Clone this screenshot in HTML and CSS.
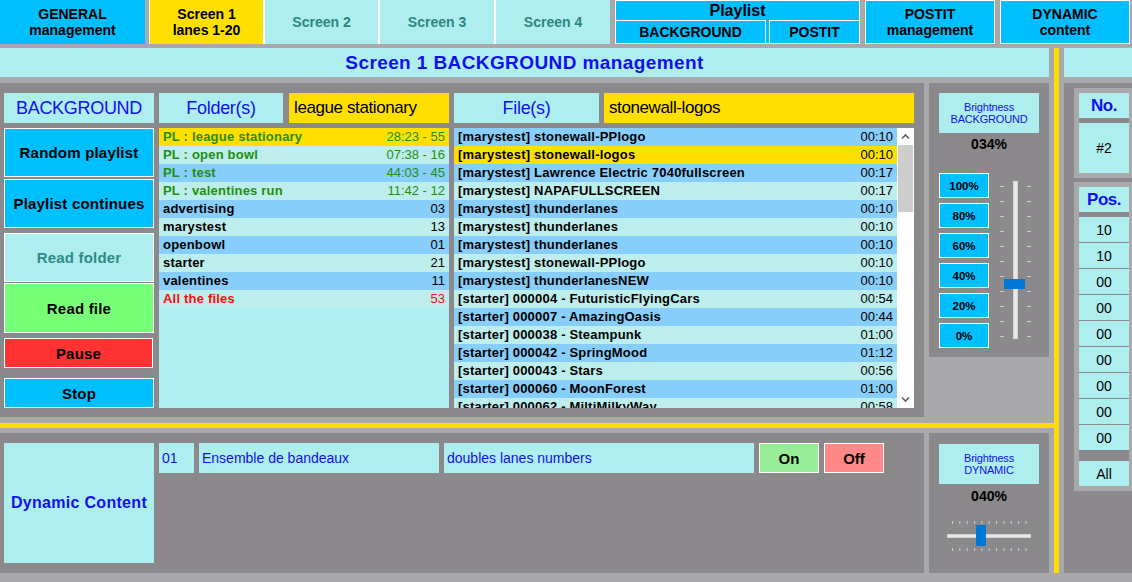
FILE: index.html
```html
<!DOCTYPE html>
<html>
<head>
<meta charset="utf-8">
<title>Screen 1 BACKGROUND management</title>
<link rel="stylesheet" href="styles.css">
</head>
<body>
<div class="app">
  <nav class="topnav">
    <div class="nav-btn general">GENERAL<br>management</div>
    <div class="tabs">
      <div class="tab active">Screen 1<br>lanes 1-20</div>
      <div class="tab">Screen 2</div>
      <div class="tab wide">Screen 3</div>
      <div class="tab wide">Screen 4</div>
    </div>
    <div class="playlist">
      <div class="pl-title">Playlist</div>
      <div class="pl-subs">
        <div class="pl-sub pl-bg">BACKGROUND</div>
        <div class="pl-sub pl-postit">POSTIT</div>
      </div>
    </div>
    <div class="nav-btn">POSTIT<br>management</div>
    <div class="nav-btn">DYNAMIC<br>content</div>
  </nav>

  <div class="main">
    <div class="leftcol">
      <div class="title">Screen 1 BACKGROUND management</div>

      <div class="upper">
        <div class="panel bgpanel">
          <div class="col-btns">
            <div class="hdr">BACKGROUND</div>
            <div class="btn blue tall b-random">Random playlist</div>
            <div class="btn blue tall b-cont">Playlist continues</div>
            <div class="btn cyan tall b-rfolder">Read folder</div>
            <div class="btn green b-rfile">Read file</div>
            <div class="btn red b-pause">Pause</div>
            <div class="btn blue b-stop">Stop</div>
          </div>

          <div class="col-folders">
            <div class="hdr-row">
              <div class="hdr h-folders">Folder(s)</div>
              <div class="field f-folder">league stationary</div>
            </div>
            <div class="list">
              <div class="row sel pl"><span class="n">PL : league stationary</span><span>28:23 - 55</span></div>
              <div class="row pl"><span class="n">PL : open bowl</span><span>07:38 - 16</span></div>
              <div class="row pl"><span class="n">PL : test</span><span>44:03 - 45</span></div>
              <div class="row pl"><span class="n">PL : valentines run</span><span>11:42 - 12</span></div>
              <div class="row"><span class="n">advertising</span><span>03</span></div>
              <div class="row"><span class="n">marystest</span><span>13</span></div>
              <div class="row"><span class="n">openbowl</span><span>01</span></div>
              <div class="row"><span class="n">starter</span><span>21</span></div>
              <div class="row"><span class="n">valentines</span><span>11</span></div>
              <div class="row allf"><span class="n">All the files</span><span>53</span></div>
            </div>
          </div>

          <div class="col-files">
            <div class="hdr-row">
              <div class="hdr h-files">File(s)</div>
              <div class="field f-file">stonewall-logos</div>
            </div>
            <div class="list files-list">
              <div class="rows">
                <div class="row"><span class="n">[marystest] stonewall-PPlogo</span><span>00:10</span></div>
                <div class="row sel"><span class="n">[marystest] stonewall-logos</span><span>00:10</span></div>
                <div class="row"><span class="n">[marystest] Lawrence Electric 7040fullscreen</span><span>00:17</span></div>
                <div class="row"><span class="n">[marystest] NAPAFULLSCREEN</span><span>00:17</span></div>
                <div class="row"><span class="n">[marystest] thunderlanes</span><span>00:10</span></div>
                <div class="row"><span class="n">[marystest] thunderlanes</span><span>00:10</span></div>
                <div class="row"><span class="n">[marystest] thunderlanes</span><span>00:10</span></div>
                <div class="row"><span class="n">[marystest] stonewall-PPlogo</span><span>00:10</span></div>
                <div class="row"><span class="n">[marystest] thunderlanesNEW</span><span>00:10</span></div>
                <div class="row"><span class="n">[starter] 000004 - FuturisticFlyingCars</span><span>00:54</span></div>
                <div class="row"><span class="n">[starter] 000007 - AmazingOasis</span><span>00:44</span></div>
                <div class="row"><span class="n">[starter] 000038 - Steampunk</span><span>01:00</span></div>
                <div class="row"><span class="n">[starter] 000042 - SpringMood</span><span>01:12</span></div>
                <div class="row"><span class="n">[starter] 000043 - Stars</span><span>00:56</span></div>
                <div class="row"><span class="n">[starter] 000060 - MoonForest</span><span>01:00</span></div>
                <div class="row"><span class="n">[starter] 000062 - MiltiMilkyWay</span><span>00:58</span></div>
              </div>
              <div class="scrollbar">
                <svg class="sb-arrow" width="17" height="17" viewBox="0 0 17 17"><polyline points="5,10.5 8.5,7 12,10.5" fill="none" stroke="#606060" stroke-width="1.6"/></svg>
                <div class="sb-track"><div class="sb-thumb"></div></div>
                <svg class="sb-arrow" width="17" height="17" viewBox="0 0 17 17"><polyline points="5,6.5 8.5,10 12,6.5" fill="none" stroke="#606060" stroke-width="1.6"/></svg>
              </div>
            </div>
          </div>
        </div>

        <div class="panel bright">
          <div class="blabel"><span>Brightness</span><span>BACKGROUND</span></div>
          <div class="bpct">034%</div>
          <div class="bbody">
            <div class="bbtns">
              <div class="bbtn">100%</div>
              <div class="bbtn">80%</div>
              <div class="bbtn">60%</div>
              <div class="bbtn">40%</div>
              <div class="bbtn">20%</div>
              <div class="bbtn">0%</div>
            </div>
            <svg class="vslider" width="31" height="158" viewBox="0 0 31 158">
              <g stroke="#cfcfcf" stroke-width="1">
                <line x1="0" y1="5.5" x2="4" y2="5.5"/><line x1="27" y1="5.5" x2="31" y2="5.5"/>
                <line x1="0" y1="20.5" x2="4" y2="20.5"/><line x1="27" y1="20.5" x2="31" y2="20.5"/>
                <line x1="0" y1="35.5" x2="4" y2="35.5"/><line x1="27" y1="35.5" x2="31" y2="35.5"/>
                <line x1="0" y1="50.5" x2="4" y2="50.5"/><line x1="27" y1="50.5" x2="31" y2="50.5"/>
                <line x1="0" y1="65.5" x2="4" y2="65.5"/><line x1="27" y1="65.5" x2="31" y2="65.5"/>
                <line x1="0" y1="80.5" x2="4" y2="80.5"/><line x1="27" y1="80.5" x2="31" y2="80.5"/>
                <line x1="0" y1="95.5" x2="4" y2="95.5"/><line x1="27" y1="95.5" x2="31" y2="95.5"/>
                <line x1="0" y1="110.5" x2="4" y2="110.5"/><line x1="27" y1="110.5" x2="31" y2="110.5"/>
                <line x1="0" y1="125.5" x2="4" y2="125.5"/><line x1="27" y1="125.5" x2="31" y2="125.5"/>
                <line x1="0" y1="140.5" x2="4" y2="140.5"/><line x1="27" y1="140.5" x2="31" y2="140.5"/>
                <line x1="0" y1="155.5" x2="4" y2="155.5"/><line x1="27" y1="155.5" x2="31" y2="155.5"/>
              </g>
              <rect x="13.5" y="0.5" width="4" height="157" fill="#e7e7e7" stroke="#d4d4d4"/>
              <rect x="4" y="98" width="21" height="10" fill="#0078d7"/>
            </svg>
          </div>
        </div>
      </div>

      <div class="hline"></div>

      <div class="lower">
        <div class="panel dynpanel">
          <div class="dynbox">Dynamic Content</div>
          <div class="cell c-num">01</div>
          <div class="cell c-name">Ensemble de bandeaux</div>
          <div class="cell c-desc">doubles lanes numbers</div>
          <div class="onoff on">On</div>
          <div class="onoff off">Off</div>
        </div>
        <div class="panel bright bright-dyn">
          <div class="blabel"><span>Brightness</span><span>DYNAMIC</span></div>
          <div class="bpct pct-dyn">040%</div>
          <svg class="hslider" width="84" height="30" viewBox="0 0 84 30">
            <g stroke="#cfcfcf" stroke-width="1">
              <line x1="5.5" y1="0" x2="5.5" y2="3"/><line x1="5.5" y1="27" x2="5.5" y2="30"/>
              <line x1="12.8" y1="0" x2="12.8" y2="3"/><line x1="12.8" y1="27" x2="12.8" y2="30"/>
              <line x1="20.2" y1="0" x2="20.2" y2="3"/><line x1="20.2" y1="27" x2="20.2" y2="30"/>
              <line x1="27.5" y1="0" x2="27.5" y2="3"/><line x1="27.5" y1="27" x2="27.5" y2="30"/>
              <line x1="34.9" y1="0" x2="34.9" y2="3"/><line x1="34.9" y1="27" x2="34.9" y2="30"/>
              <line x1="42.2" y1="0" x2="42.2" y2="3"/><line x1="42.2" y1="27" x2="42.2" y2="30"/>
              <line x1="49.6" y1="0" x2="49.6" y2="3"/><line x1="49.6" y1="27" x2="49.6" y2="30"/>
              <line x1="56.9" y1="0" x2="56.9" y2="3"/><line x1="56.9" y1="27" x2="56.9" y2="30"/>
              <line x1="64.3" y1="0" x2="64.3" y2="3"/><line x1="64.3" y1="27" x2="64.3" y2="30"/>
              <line x1="71.6" y1="0" x2="71.6" y2="3"/><line x1="71.6" y1="27" x2="71.6" y2="30"/>
              <line x1="79" y1="0" x2="79" y2="3"/><line x1="79" y1="27" x2="79" y2="30"/>
            </g>
            <rect x="0.5" y="13.5" width="83" height="3" fill="#e7e7e7" stroke="#d4d4d4"/>
            <rect x="29" y="4" width="10" height="21" fill="#0078d7"/>
          </svg>
        </div>
      </div>
    </div>

    <div class="vline"></div>

    <div class="rightcol">
      <div class="rtitle"></div>
      <div class="rpanel">
        <div class="rbox">
          <div class="rcell rhead">No.</div>
          <div class="rcell rbig">#2</div>
        </div>
        <div class="rbox rbox-pos">
          <div class="rcell rhead">Pos.</div>
          <div class="rrows">
            <div class="rcell">10</div>
            <div class="rcell">10</div>
            <div class="rcell">00</div>
            <div class="rcell">00</div>
            <div class="rcell">00</div>
            <div class="rcell">00</div>
            <div class="rcell">00</div>
            <div class="rcell">00</div>
            <div class="rcell">00</div>
          </div>
          <div class="rcell rall">All</div>
        </div>
      </div>
    </div>
  </div>
</div>
</body>
</html>
```

FILE: styles.css
```css
* { box-sizing: border-box; margin: 0; padding: 0; }
html, body { width: 1132px; height: 582px; overflow: hidden; }
body {
  background: #a9a8aa;
  font-family: "Liberation Sans", Arial, sans-serif;
  color: #000;
}
.app { width: 1132px; height: 582px; overflow: hidden; }

/* ---------- top navigation ---------- */
.topnav { display: flex; height: 44px; }
.nav-btn {
  width: 130px;
  margin-left: 5px;
  background: #00bfff;
  border: 1px solid #fff;
  display: flex; align-items: center; justify-content: center;
  text-align: center;
  font-weight: bold; font-size: 14px; line-height: 16px;
}
.nav-btn.general { width: 145px; margin-left: 0; border: none; }
.tabs {
  display: flex; gap: 2px;
  width: 461px; margin-left: 4px; padding-left: 1px;
  background: #fff;
}
.tab {
  width: 113px;
  background: #afeeee;
  color: #2b8585;
  display: flex; align-items: center; justify-content: center;
  text-align: center;
  font-weight: bold; font-size: 14px; line-height: 16px;
}
.tab.wide { width: 114px; }
.tab.active { background: #ffdf00; color: #000; }
.playlist {
  width: 245px; margin-left: 5px;
  background: #00bfff;
  border: 1px solid #fff;
  display: flex; flex-direction: column;
}
.pl-title { height: 19px; line-height: 19px; text-align: center; font-weight: bold; font-size: 16px; }
.pl-subs { flex: 1; display: flex; justify-content: space-between; }
.pl-sub {
  border: 1px solid #fff; border-bottom: none;
  display: flex; align-items: center; justify-content: center;
  font-weight: bold; font-size: 14px;
}
.pl-bg { width: 151px; margin-left: -1px; }
.pl-postit { width: 91px; margin-right: -1px; }

/* ---------- main area ---------- */
.main { display: flex; height: 525px; margin-top: 4px; }
.leftcol { width: 1049px; display: flex; flex-direction: column; }
.title {
  height: 29px;
  background: #afeeee;
  color: #1010f0;
  display: flex; align-items: center; justify-content: center;
  font-weight: bold; font-size: 19px; letter-spacing: 0.4px;
}
.upper { display: flex; height: 334px; margin-top: 6px; }
.panel { background: #8b898c; }
.bgpanel { width: 924px; padding: 10px 10px 9px 4px; display: flex; gap: 5px; }

.hdr {
  height: 30px;
  background: #afeeee;
  color: #1010f0;
  display: flex; align-items: center; justify-content: center;
  font-size: 18px; letter-spacing: -0.3px;
}
.col-btns { width: 150px; display: flex; flex-direction: column; }
.btn {
  border: 1px solid #fff;
  display: flex; align-items: center; justify-content: center;
  font-weight: bold; font-size: 15px; letter-spacing: 0.2px;
  height: 30px;
}
.btn.tall { height: 49px; }
.btn.blue { background: #00bfff; }
.btn.cyan { background: #afeeee; color: #2e8a8a; }
.btn.green { background: #77ff77; height: 50px; }
.btn.red { background: #ff3333; width: 149px; }
.b-random { margin-top: 5px; }
.b-cont { margin-top: 2px; }
.b-rfolder { margin-top: 5px; }
.b-rfile { margin-top: 1px; }
.b-pause { margin-top: 5px; }
.b-stop { margin-top: 10px; }

.col-folders { width: 290px; }
.col-files { width: 460px; }
.hdr-row { display: flex; height: 30px; gap: 6px; }
.col-files .hdr-row { gap: 5px; }
.h-folders { width: 124px; }
.h-files { width: 145px; }
.field {
  flex: 1;
  background: #ffdf00;
  display: flex; align-items: center;
  padding-left: 5px;
  font-size: 17px; letter-spacing: -0.4px;
}

.list { margin-top: 5px; height: 280px; background: #afeeee; overflow: hidden; }
.row {
  display: flex; justify-content: space-between;
  height: 18px; line-height: 18px;
  padding: 0 4px;
  font-size: 13px;
  white-space: nowrap;
}
.row .n { font-weight: bold; letter-spacing: 0.2px; }
.row:nth-child(odd) { background: #87cefa; }
.row:nth-child(even) { background: #bdeeec; }
.row.sel { background: #ffdf00; }
.row.pl { color: #1f8f0f; }
.row.allf { color: #ff0a0a; }

.files-list { display: flex; }
.rows { flex: 1; overflow: hidden; }
.scrollbar { width: 17px; background: #fff; display: flex; flex-direction: column; }
.sb-arrow { display: block; flex: none; }
.sb-track { flex: 1; padding: 0 1px; }
.sb-thumb { height: 67px; background: #cdcdcd; }

/* ---------- brightness panels ---------- */
.bright { width: 120px; margin-left: 5px; height: 274px; padding: 10px 10px 0 10px; }
.blabel {
  width: 100px; height: 40px;
  background: #afeeee;
  color: #1010f0;
  display: flex; flex-direction: column; align-items: center; justify-content: center;
  font-size: 11px; line-height: 12px; letter-spacing: -0.2px;
}
.bpct { width: 100px; height: 22px; line-height: 22px; text-align: center; font-weight: bold; font-size: 14px; }
.bbody { display: flex; margin-top: 18px; }
.bbtns { width: 50px; display: flex; flex-direction: column; gap: 5px; }
.bbtn {
  height: 25px;
  background: #00bfff;
  border: 1px solid #fff;
  display: flex; align-items: center; justify-content: center;
  font-weight: bold; font-size: 11.5px;
}
.vslider { display: block; margin-left: 11px; margin-top: 8px; }

.hline { height: 5px; margin-top: 6px; margin-right: -5px; background: #ffdd00; }
.lower { display: flex; height: 140px; margin-top: 5px; }
.dynpanel { width: 924px; padding: 10px 4px; display: flex; gap: 5px; align-items: flex-start; }
.dynbox {
  width: 150px; height: 120px;
  background: #afeeee;
  color: #1010f0;
  display: flex; align-items: center; justify-content: center;
  font-weight: bold; font-size: 16px; letter-spacing: 0.3px;
}
.cell {
  height: 30px;
  background: #afeeee;
  color: #1010f0;
  display: flex; align-items: center;
  padding-left: 3px;
  font-size: 14px;
}
.c-num { width: 35px; }
.c-name { width: 240px; }
.c-desc { width: 310px; }
.onoff {
  width: 60px; height: 30px;
  border: 1px solid #fff;
  display: flex; align-items: center; justify-content: center;
  font-weight: bold; font-size: 15px;
}
.onoff.on { background: #98ee98; }
.onoff.off { background: #ff8888; }
.bright-dyn { height: 140px; padding-top: 11px; }
.pct-dyn { height: 24px; line-height: 24px; }
.hslider { display: block; margin-left: 8px; margin-top: 13px; }

/* ---------- right column ---------- */
.vline { width: 5px; margin: 0 5px; background: #ffdd00; }
.rightcol { width: 68px; display: flex; flex-direction: column; }
.rtitle { height: 29px; background: #afeeee; }
.rpanel { flex: 1; margin-top: 6px; background: #8b898c; padding: 5px 0 0 10px; overflow: hidden; }
.rbox {
  width: 60px;
  border: 5px solid #a9a8aa;
  background: #8b898c;
  display: flex; flex-direction: column;
}
.rbox-pos { margin-top: 4px; }
.rcell {
  width: 50px; height: 25px;
  background: #afeeee;
  display: flex; align-items: center; justify-content: center;
  font-size: 14px;
}
.rhead { color: #1010f0; font-weight: bold; font-size: 17px; letter-spacing: -0.5px; }
.rbig { height: 50px; margin-top: 5px; }
.rrows { margin-top: 5px; display: flex; flex-direction: column; gap: 1px; }
.rall { margin-top: 11px; }
```
